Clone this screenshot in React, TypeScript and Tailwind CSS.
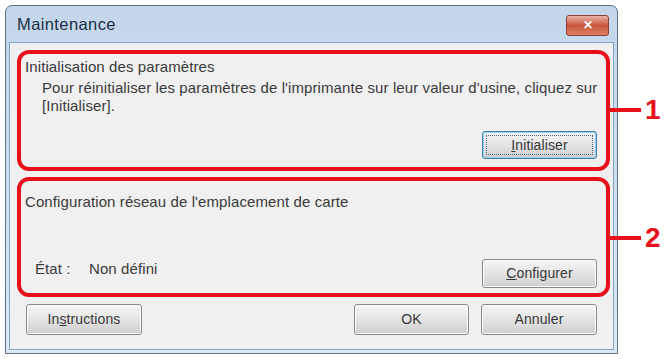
import React from 'react'

function WinButton({
  children,
  isDefault = false,
  className = '',
}: {
  children: React.ReactNode
  isDefault?: boolean
  className?: string
}) {
  return (
    <button
      className={`relative flex items-center justify-center rounded-[3px] border text-[14px] text-[#383838] bg-gradient-to-b from-[#f6f6f6] via-[#e4e4e4] to-[#cfcfcf] ${
        isDefault ? 'border-[#3c7fb1] shadow-[inset_0_0_0_1px_#9ed1ee]' : 'border-[#8a8a8a] shadow-[inset_0_0_0_1px_#fbfbfb]'
      } ${className}`}
    >
      {isDefault && (
        <span className="absolute inset-[3px] border border-dotted border-[#4a6a86]" />
      )}
      <span className="relative">{children}</span>
    </button>
  )
}

function Callout({ label, top }: { label: string; top: string }) {
  return (
    <div className={`absolute left-[610px] flex items-center ${top}`}>
      <div className="w-[31px] h-[4px] bg-[#e8101a]" />
      <span className="ml-[4px] text-[28px] font-bold leading-none text-[#e8101a]">{label}</span>
    </div>
  )
}

export default function App() {
  return (
    <div
      className="relative w-[670px] h-[359px] bg-white pt-[5px] pl-[5px]"
      style={{ fontFamily: '"Liberation Sans", Arial, sans-serif' }}
    >
      <div className="w-[613px] h-[349px] flex flex-col rounded-t-[7px] border border-[#5d6f82] bg-gradient-to-b from-[#c3d6ea] to-[#dce8f5]">
        {/* title bar */}
        <div className="h-[36px] flex items-center justify-between pl-[11px] pr-[8px]">
          <span className="text-[16.5px] text-[#1b2f44] tracking-[0.4px]">Maintenance</span>
          <div className="mt-[2px] w-[43px] h-[21px] flex items-center justify-center rounded-[3px] border border-[#8a4038] bg-gradient-to-b from-[#e9b3a6] via-[#c8553f] to-[#dd8060]">
            <span className="text-[12px] font-bold leading-none text-white">✕</span>
          </div>
        </div>

        {/* client area */}
        <div className="flex-1 mx-[3px] mb-[3px] bg-[#f0f0f0] border border-[#7fa6c6] pl-[7px] pt-[7px] flex flex-col text-[15px] tracking-[0.1px] text-[#3a3a3a]">
          <div className="w-[593px] h-[121px] rounded-[12px] border-[4px] border-[#e8101a] pt-[4px] pl-[4px] pr-[9px] pb-[8px] flex flex-col">
            <div className="leading-[18px]">Initialisation des paramètres</div>
            <div className="mt-[3px] pl-[17px] leading-[18px] whitespace-nowrap">
              Pour réinitialiser les paramètres de l&apos;imprimante sur leur valeur d&apos;usine, cliquez sur
              <br />
              [Initialiser].
            </div>
            <div className="mt-auto flex justify-end">
              <WinButton isDefault className="w-[115px] h-[28px]">
                <u>I</u>nitialiser
              </WinButton>
            </div>
          </div>

          <div className="mt-[6px] w-[593px] h-[120px] rounded-[12px] border-[4px] border-[#e8101a] pt-[12px] pl-[4px] pr-[9px] pb-[5px] flex flex-col">
            <div className="leading-[18px]">Configuration réseau de l&apos;emplacement de carte</div>
            <div className="mt-auto flex items-end justify-between">
              <div className="pl-[10px] pb-[10px] flex leading-[18px]">
                <span className="w-[54px]">État :</span>
                <span>Non défini</span>
              </div>
              <WinButton className="w-[115px] h-[29px]">
                <u>C</u>onfigurer
              </WinButton>
            </div>
          </div>

          <div className="mt-[7px] flex items-center pl-[9px]">
            <WinButton className="w-[116px] h-[31px]">
              In<u>s</u>tructions
            </WinButton>
            <WinButton className="ml-[212px] w-[115px] h-[31px]">OK</WinButton>
            <WinButton className="ml-[12px] w-[116px] h-[31px]">Annuler</WinButton>
          </div>
        </div>
      </div>

      <Callout label="1" top="top-[96px]" />
      <Callout label="2" top="top-[224px]" />
    </div>
  )
}
